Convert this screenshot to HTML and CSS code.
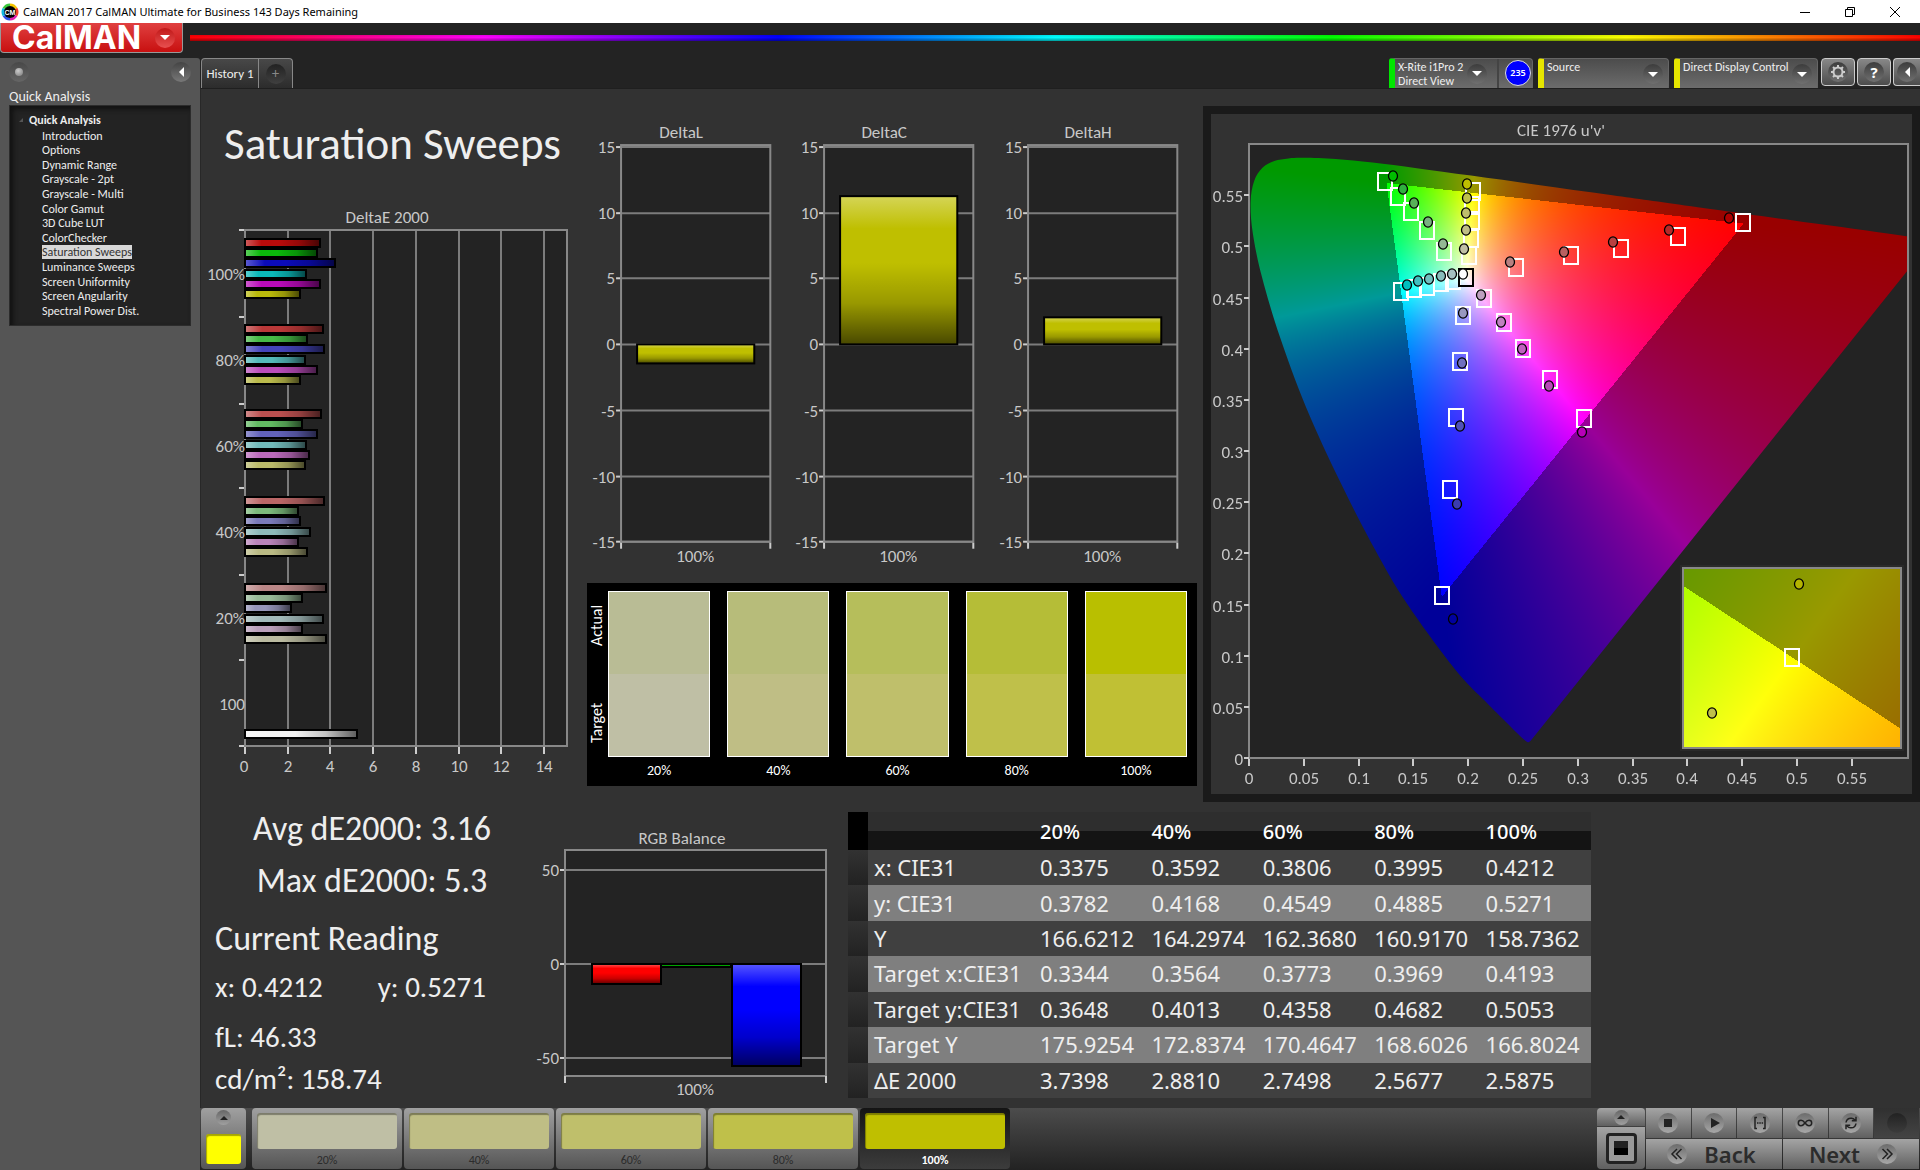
FILE: index.html
```html
<!DOCTYPE html>
<html lang="en">
<head>
<meta charset="utf-8">
<title>CalMAN 2017</title>
<link rel="stylesheet" href="styles.css">
</head>
<body>
<div class="titlebar">
  <svg class="app-icon" viewBox="0 0 18 18" aria-hidden="true">
    <g fill="none" stroke-width="3">
      <path d="M9 2a7 7 0 0 1 6 3.5" stroke="#f3c400"/>
      <path d="M15 5.500a7 7 0 0 1 0 7" stroke="#f0402c"/>
      <path d="M15 12.500a7 7 0 0 1-6 3.500" stroke="#e020b0"/>
      <path d="M9 16a7 7 0 0 1-6-3.500" stroke="#3050e8"/>
      <path d="M3 12.500a7 7 0 0 1 0-7" stroke="#10b8e0"/>
      <path d="M3 5.500a7 7 0 0 1 6-3.500" stroke="#3cc83c"/>
    </g>
    <circle cx="9" cy="9" r="6" fill="#000"/>
    <text x="9" y="12" class="app-icon-text">CM</text>
  </svg>
  <span class="titlebar-text">CalMAN 2017 CalMAN Ultimate for Business 143 Days Remaining</span>
  <div class="window-controls">
    <button aria-label="Minimize"><svg viewBox="0 0 12 12"><path d="M1 6.500h10"/></svg></button>
    <button aria-label="Restore"><svg viewBox="0 0 12 12"><path d="M1.500 3.500h7v7h-7zM3.500 3.500v-2h7v7h-2"/></svg></button>
    <button aria-label="Close"><svg viewBox="0 0 12 12"><path d="M1 1l10 10M11 1L1 11"/></svg></button>
  </div>
</div>

<div class="brandbar">
  <button class="logo"><span>CalMAN</span><i class="knob knob-red"><b class="tri-down"></b></i></button>
  <div class="rainbow"></div>
</div>

<div class="shell">
  <aside class="sidebar">
    <div class="sidebar-top">
      <button class="knob knob-pin" aria-label="Pin panel"><b class="bead"></b></button>
      <button class="knob knob-back" aria-label="Collapse panel"><b class="tri-left"></b></button>
    </div>
    <h2>Quick Analysis</h2>
    <nav class="tree">
      <a class="tree-root" href="#"><b class="corner"></b>Quick Analysis</a>
      <a href="#">Introduction</a>
      <a href="#">Options</a>
      <a href="#">Dynamic Range</a>
      <a href="#">Grayscale - 2pt</a>
      <a href="#">Grayscale - Multi</a>
      <a href="#">Color Gamut</a>
      <a href="#">3D Cube LUT</a>
      <a href="#">ColorChecker</a>
      <a href="#" class="current" aria-current="page">Saturation Sweeps</a>
      <a href="#">Luminance Sweeps</a>
      <a href="#">Screen Uniformity</a>
      <a href="#">Screen Angularity</a>
      <a href="#">Spectral Power Dist.</a>
    </nav>
  </aside>

  <div class="content">
    <div class="toolbar">
      <div class="tabs">
        <button class="tab">History 1</button>
        <button class="tab tab-add" aria-label="Add history"><i class="knob knob-dark">+</i></button>
      </div>
      <div class="devices">
        <div class="device device-meter">
          <button class="device-main"><span>X-Rite i1Pro 2<br>Direct View</span><i class="knob"><b class="tri-down"></b></i></button>
          <span class="level">235</span>
        </div>
        <div class="device device-source">
          <select aria-label="Source"><option>Source</option></select>
          <i class="knob"><b class="tri-down"></b></i>
        </div>
        <div class="device device-display">
          <select aria-label="Direct Display Control"><option>Direct Display Control</option></select>
          <i class="knob"><b class="tri-down"></b></i>
        </div>
        <div class="tools">
          <button class="tool" aria-label="Settings"><i class="knob"><svg viewBox="0 0 20 20" class="gear"><circle cx="10" cy="10" r="4.500"/><path d="M10 5.500V3M10 17v-2.500M5.500 10H3M17 10h-2.500M6.800 6.800L5 5M15 15l-1.800-1.800M6.800 13.200L5 15M15 5l-1.800 1.800"/></svg></i></button>
          <button class="tool" aria-label="Help"><i class="knob knob-help">?</i></button>
          <button class="tool tool-last" aria-label="Collapse"><i class="knob"><b class="tri-left"></b></i></button>
        </div>
      </div>
    </div>

    <main>
      <div class="row-top">
        <section class="col-left">
          <h1>Saturation Sweeps</h1>
          <svg id="delta-e" class="chart" viewBox="0 0 374 590"></svg>
        </section>
        <section class="col-mid">
          <div class="deltas">
            <svg id="delta-l" class="chart" viewBox="0 0 203 464"></svg>
            <svg id="delta-c" class="chart" viewBox="0 0 203 464"></svg>
            <svg id="delta-h" class="chart" viewBox="0 0 203 464"></svg>
          </div>
          <div class="swatches">
            <div class="swatch-axis"><span>Actual</span><span>Target</span></div>
            <div class="swatch-grid">
              <figure class="s20"><div class="pair"></div><figcaption>20%</figcaption></figure>
              <figure class="s40"><div class="pair"></div><figcaption>40%</figcaption></figure>
              <figure class="s60"><div class="pair"></div><figcaption>60%</figcaption></figure>
              <figure class="s80"><div class="pair"></div><figcaption>80%</figcaption></figure>
              <figure class="s100"><div class="pair"></div><figcaption>100%</figcaption></figure>
            </div>
          </div>
        </section>
        <section class="col-cie">
          <canvas id="gamut" width="701" height="680"></canvas>
          <svg id="cie" class="chart" viewBox="0 0 701 680"></svg>
        </section>
      </div>

      <div class="row-bottom">
        <section class="stats">
          <p class="big mid">Avg dE2000: 3.16</p>
          <p class="big mid">Max dE2000: 5.3</p>
          <p class="big reading">Current Reading</p>
          <p class="xy"><span>x: 0.4212</span><span>y: 0.5271</span></p>
          <p class="lum">fL: 46.33</p>
          <p class="cd">cd/m²: 158.74</p>
        </section>
        <section class="balance">
          <svg id="rgb" class="chart" viewBox="0 0 304 280"></svg>
        </section>
        <section class="data">
          <table>
            <thead><tr><th class="grip"></th><th></th><th>20%</th><th>40%</th><th>60%</th><th>80%</th><th>100%</th></tr></thead>
            <tbody>
              <tr><td class="grip"></td><th>x: CIE31</th><td>0.3375</td><td>0.3592</td><td>0.3806</td><td>0.3995</td><td>0.4212</td></tr>
              <tr><td class="grip"></td><th>y: CIE31</th><td>0.3782</td><td>0.4168</td><td>0.4549</td><td>0.4885</td><td>0.5271</td></tr>
              <tr><td class="grip"></td><th>Y</th><td>166.6212</td><td>164.2974</td><td>162.3680</td><td>160.9170</td><td>158.7362</td></tr>
              <tr><td class="grip"></td><th>Target x:CIE31</th><td>0.3344</td><td>0.3564</td><td>0.3773</td><td>0.3969</td><td>0.4193</td></tr>
              <tr><td class="grip"></td><th>Target y:CIE31</th><td>0.3648</td><td>0.4013</td><td>0.4358</td><td>0.4682</td><td>0.5053</td></tr>
              <tr><td class="grip"></td><th>Target Y</th><td>175.9254</td><td>172.8374</td><td>170.4647</td><td>168.6026</td><td>166.8024</td></tr>
              <tr><td class="grip"></td><th>ΔE 2000</th><td>3.7398</td><td>2.8810</td><td>2.7498</td><td>2.5677</td><td>2.5875</td></tr>
            </tbody>
          </table>
        </section>
      </div>
    </main>

    <footer>
      <button class="series" aria-label="Series colour"><i class="knob knob-small"><b class="tri-up"></b></i><span class="chip"></span></button>
      <div class="levels">
        <button class="level-btn l20"><span class="chip"></span>20%</button>
        <button class="level-btn l40"><span class="chip"></span>40%</button>
        <button class="level-btn l60"><span class="chip"></span>60%</button>
        <button class="level-btn l80"><span class="chip"></span>80%</button>
        <button class="level-btn l100 active"><span class="chip"></span>100%</button>
      </div>
      <div class="player">
        <div class="pattern">
          <button class="pattern-up" aria-label="Pattern options"><i class="knob knob-small"><b class="tri-up"></b></i></button>
          <button class="pattern-show" aria-label="Pattern window"><span class="frame"><span></span></span></button>
        </div>
        <div class="transport">
          <button aria-label="Stop"><svg viewBox="0 0 20 20"><path d="M6 6h8v8H6z"/></svg></button>
          <button aria-label="Play"><svg viewBox="0 0 20 20"><path d="M7 5l9 5-9 5z"/></svg></button>
          <button aria-label="Read series"><svg viewBox="0 0 20 20" class="line"><path d="M7 4.500H5v11h2M13 4.500h2v11h-2M7 10h1.500M9.300 10h1.500M11.600 10h1.500"/></svg></button>
          <button aria-label="Read continuously"><svg viewBox="0 0 20 20" class="line"><path d="M10 10C8.500 8 7.500 7.300 6 7.300a2.700 2.700 0 0 0 0 5.400c1.500 0 2.500-.7 4-2.700s2.500-2.700 4-2.700a2.700 2.700 0 0 1 0 5.400c-1.500 0-2.500-.7-4-2.700z"/></svg></button>
          <button aria-label="Refresh"><svg viewBox="0 0 20 20" class="line"><path d="M5 9.500c.5-3 3-4.500 5.500-4.300 1.500.1 2.500.8 3.500 1.800M15 3.800v4h-4.200M15 10.500c-.5 3-3 4.500-5.500 4.300-1.500-.1-2.500-.8-3.500-1.800M5 16.200v-4h4.200"/></svg></button>
          <button class="off" aria-label="Record" disabled><svg viewBox="0 0 20 20"></svg></button>
        </div>
        <div class="pager">
          <button><svg viewBox="0 0 20 20" class="line"><path d="M10 5l-5 5 5 5M14.500 5l-5 5 5 5"/></svg><span>Back</span></button>
          <button><span>Next</span><svg viewBox="0 0 20 20" class="line"><path d="M10 5l5 5-5 5M5.500 5l5 5-5 5"/></svg></button>
        </div>
      </div>
    </footer>
  </div>
</div>
<script src="charts.js"></script>
</body>
</html>
```
FILE: styles.css
```css
* { box-sizing: border-box; }

body {
  margin: 0;
  min-height: 100vh;
  display: flex;
  flex-direction: column;
  background: #232323;
  color: #eee;
  font-family: Carlito, Lato, sans-serif;
  font-size: 12px;
  line-height: 14px;
}

h1, h2, p, figure { margin: 0; font-weight: 400; }
button, select {
  margin: 0;
  padding: 0;
  border: 0;
  color: inherit;
  font: inherit;
  background: none;
}
a { color: inherit; text-decoration: none; }

/* window title */
.titlebar {
  display: flex;
  align-items: center;
  height: 23px;
  padding: 0 3px 0 1px;
  background: #fff;
  color: #000;
  font: 11px/22px "Noto Sans", "Open Sans", sans-serif;
}
.app-icon { width: 18px; height: 18px; }
.app-icon-text { font: 700 7px "Liberation Sans", sans-serif; fill: #fff; text-anchor: middle; }
.titlebar-text { margin: 0 auto 0 4px; }
.window-controls { display: flex; height: 21px; }
.window-controls button { width: 45px; display: grid; place-items: center; }
.window-controls svg { width: 12px; height: 12px; fill: none; stroke: #000; }

/* brand strip */
.brandbar { display: flex; height: 35px; }
.logo {
  display: flex;
  align-items: center;
  justify-content: space-between;
  width: 183px;
  height: 30px;
  padding: 0 7px 0 11px;
  border: 1px solid #999;
  border-top: 0;
  border-radius: 0 0 4px 4px;
  background: linear-gradient(#e04040, #c81010);
  color: #fff;
  font: 700 32px/28px Inter, sans-serif;
}
.rainbow {
  flex: 1;
  height: 6px;
  margin: 12px 0 0 7px;
  background: linear-gradient(rgba(0,0,0,.1), transparent 40%, rgba(0,0,0,.4)),
    linear-gradient(90deg, #f00, #f0f 17%, #00f 34%, #0ff 50%, #0f0 66%, #ff0 83%, #f00);
}

/* round knobs */
.knob {
  flex: none;
  display: grid;
  place-items: center;
  width: 20px;
  height: 20px;
  border-radius: 50%;
  background: linear-gradient(#3c3c3c, #707070);
  font-style: normal;
}
.knob-red { background: linear-gradient(#c01818, #e85050); }
.knob-pin { background: linear-gradient(#484848, #666); }
.knob-back { background: linear-gradient(#444, #787878); }
.knob-dark { background: linear-gradient(#222, #404040); color: #888; font: 14px/18px "Noto Sans", sans-serif; }
.knob-small { width: 15px; height: 15px; background: linear-gradient(#666, #a0a0a0); }
.knob-help { color: #fff; font: 700 15px/20px "Noto Sans", sans-serif; }
.tri-down { border: 5px solid transparent; border-top-color: #fff; border-bottom: 0; }
.tri-up { border: 4px solid transparent; border-bottom-color: #222; border-top: 0; }
.tri-left { border: 5px solid transparent; border-right-color: #fff; border-left: 0; }
.bead { width: 8px; height: 8px; border-radius: 50%; background: radial-gradient(circle at 40% 35%, #ccc, #777); }

/* sidebar */
.shell { flex: 1; display: flex; }
.sidebar {
  width: 200px;
  flex: none;
  padding: 4px 9px;
  background: #555;
  border-radius: 0 3px 0 0;
}
.sidebar-top { display: flex; justify-content: space-between; }
.sidebar h2 { margin: 7px 0 0; font-size: 14px; line-height: 16px; }
.tree {
  display: flex;
  flex-direction: column;
  align-items: flex-start;
  justify-content: space-between;
  min-height: 221px;
  padding: 7px 0 7px 32px;
  background: #232323;
  border: 1px solid #2c2c2c;
  box-shadow: inset 3px 3px 5px #111;
}
.tree .tree-root { display: flex; align-items: center; margin: 0 0 1px -23px; font-weight: 700; }
.corner { width: 4px; height: 4px; margin-right: 6px; border: 2px solid transparent; border-right-color: #555; border-bottom-color: #555; }
.tree .current { background: #d8d8d8; color: #333; }

/* tab strip and device selectors */
.content { flex: 1; min-width: 0; display: flex; flex-direction: column; }
.toolbar { display: flex; justify-content: space-between; height: 30px; }
.tabs { display: flex; margin-left: 1px; }
.tab {
  width: 58px;
  border: 1px solid #888;
  border-bottom: 0;
  border-radius: 4px 0 0 0;
  background: linear-gradient(#484848, #2c2c2c);
  font-size: 13px;
}
.tab-add { display: grid; place-items: center; width: 34px; border-left: 0; border-radius: 0 4px 0 0; }
.devices { display: flex; gap: 5px; }
.device {
  position: relative;
  display: flex;
  border: 1px solid #666;
  border-bottom: 0;
  border-left: 6px solid #e6e600;
  border-radius: 3px 4px 0 0;
  background: linear-gradient(#4c4c4c, #6c6c6c);
}
.device-meter { width: 144px; border-left-color: #00e600; }
.device-source { width: 131px; }
.device-display { width: 144px; }
.device-main {
  display: flex;
  align-items: center;
  justify-content: space-between;
  width: 104px;
  padding: 0 10px 0 3px;
  border-right: 2px solid #444;
  text-align: left;
}
.level {
  width: 26px;
  height: 26px;
  margin: 1px 0 0 6px;
  border: 1px solid #ddd;
  border-radius: 50%;
  background: #00f;
  color: #fff;
  font: 600 9px/24px "Noto Sans", sans-serif;
  text-align: center;
}
.device select { appearance: none; width: 100%; padding: 0 0 14px 3px; line-height: 14px; }
.device > .knob { position: absolute; right: 5px; bottom: 4px; pointer-events: none; }
.tools { display: flex; gap: 2px; margin-left: -2px; }
.tool {
  display: grid;
  place-items: center;
  width: 34px;
  height: 28px;
  border: 1px solid #ccc;
  border-radius: 4px;
  background: linear-gradient(#888, #4c4c4c);
}
.tool-last { width: 27px; border-right: 0; border-radius: 4px 0 0 4px; }
.gear { width: 20px; height: 20px; fill: none; stroke: #ccc; stroke-width: 2; }

/* dashboard */
main { flex: 1; padding-top: 17px; background: #323232; border-left: 1px solid #282828; border-top: 1px solid #1f1f1f; }
.row-top { display: grid; grid-template-columns: 374fr 628fr 717fr; align-items: start; }
h1 { padding: 10px 0 0 23px; height: 94px; font-size: 45px; line-height: 56px; }
.chart { display: block; width: 100%; }
.chart text { fill: #c8c8c8; font-size: 17px; }
.deltas { display: grid; grid-template-columns: repeat(3, 1fr); padding: 0 14px 0 4px; }
.swatches {
  display: flex;
  gap: 4px;
  margin: 12px 6px 0 12px;
  padding: 8px 10px 5px 3px;
  background: #000;
  color: #fff;
  font-size: 14px;
  line-height: 20px;
  text-align: center;
}
.swatch-axis {
  display: flex;
  flex-direction: row-reverse;
  justify-content: space-between;
  width: 14px;
  height: 166px;
  padding: 14px 0;
  writing-mode: vertical-rl;
  transform: rotate(180deg);
  font-size: 16px;
  line-height: 14px;
}
.swatch-grid { flex: 1; display: grid; grid-template-columns: repeat(5, 1fr); gap: 17px; }
.pair { height: 166px; border: 1px solid #fff; }
.swatches figcaption { padding-top: 4px; }
.s20 .pair { background: linear-gradient(#b9bc95 50%, #bfbfa5 50%); }
.s40 .pair { background: linear-gradient(#b7bc7a 50%, #bfbe85 50%); }
.s60 .pair { background: linear-gradient(#b6be5b 50%, #bfbf6b 50%); }
.s80 .pair { background: linear-gradient(#b5bd37 50%, #bfc04a 50%); }
.s100 .pair { background: linear-gradient(#b9bf00 50%, #c0c034 50%); }
.col-cie { display: grid; border: 8px solid #1a1a1a; }
.col-cie > * { grid-area: 1 / 1; width: 100%; }

.row-bottom { display: grid; grid-template-columns: 334fr 304fr 9fr 743fr 329fr; align-items: start; }
.stats { padding: 1px 0 0 14px; }
.stats p { font-size: 29px; line-height: 42px; }
.stats .big { font-size: 34px; line-height: 52px; }
.stats .mid { width: 314px; text-align: center; }
.stats .reading { padding-top: 6px; }
.stats .xy { display: flex; gap: 55px; padding-top: 1px; }
.stats .lum { padding-top: 8px; }
.balance { padding-top: 24px; }
.data { grid-column: 4; padding-top: 10px; }
table { width: 100%; height: 286px; border-collapse: collapse; table-layout: fixed; font: 22px/35px "Noto Sans", "Open Sans", sans-serif; }
th, td { padding: 0 0 0 6px; text-align: left; font-weight: 400; white-space: nowrap; }
thead th { height: 38px; font-size: 20px; font-weight: 500; color: #fff; }
thead { background: linear-gradient(#2e2e2e 50%, #141414 50%); }
thead .grip { width: 20px; background: #000; }
thead th:nth-child(2) { width: 166px; }
tbody tr { background: #404040; }
tbody tr:nth-child(even) { background: #7f7f7f; }
tbody .grip { padding: 0; background: linear-gradient(#323232, #222); }

/* bottom bar */
footer {
  display: flex;
  height: 62px;
  padding-left: 1px;
  background: linear-gradient(#4c4c4c, #222);
}
footer button { color: #2c2c2c; }
.series {
  display: flex;
  flex-direction: column;
  align-items: center;
  justify-content: space-between;
  width: 45px;
  height: 61px;
  padding: 2px 0 5px;
  border-radius: 4px;
  background: linear-gradient(#a0a0a0, #555);
}
.chip { display: block; border-radius: 3px; box-shadow: inset 1px 2px 1px rgba(0,0,0,.35); }
.series .chip { width: 35px; height: 30px; background: #ff0; }
.levels { display: flex; gap: 2px; margin-left: 6px; }
.level-btn {
  width: 150px;
  height: 61px;
  padding: 5px 5px 0;
  border-radius: 4px;
  background: linear-gradient(#a0a0a0, #555);
  line-height: 22px;
}
.level-btn .chip { height: 36px; }
.level-btn.active { background: linear-gradient(#141414, #3c3c3c); color: #fff; font-weight: 700; }
.l20 .chip { background: #bfbfa5; }
.l40 .chip { background: #bfbe85; }
.l60 .chip { background: #bfbf6b; }
.l80 .chip { background: #bfc04a; }
.l100 .chip { background: #bfbf00; }

.player {
  display: grid;
  grid-template-columns: 48px 273px;
  grid-template-rows: 30px 30px;
  gap: 1px;
  margin: 0 1px 0 auto;
}
.pattern { grid-row: span 2; display: grid; grid-template-rows: 18px 1fr; gap: 1px; }
.pattern button, .transport button, .pager button {
  display: flex;
  align-items: center;
  justify-content: center;
  background: linear-gradient(#a4a4a4, #606060);
}
.pattern-up { border-radius: 4px 4px 0 0; }
.pattern-show { border-radius: 0 0 4px 4px; }
.frame { display: grid; place-items: center; width: 31px; height: 31px; border: 3px solid #222; border-radius: 4px; background: #999; }
.frame span { width: 14px; height: 14px; background: linear-gradient(#222 50%, #000 50%); }
.transport { display: grid; grid-template-columns: repeat(6, 1fr); gap: 1px; }
.transport svg, .pager svg { width: 20px; height: 20px; border-radius: 50%; background: linear-gradient(#6c6c6c, #a8a8a8); fill: #222; }
.player svg.line { fill: none; stroke: #222; stroke-width: 1.5; }
.transport .off { background: linear-gradient(#303030, #444); }
.transport .off svg { background: linear-gradient(#222, #3c3c3c); }
.pager { display: grid; grid-template-columns: 1fr 1fr; gap: 1px; }
.pager button { gap: 17px; padding-right: 5px; font: 600 22px/28px "Noto Sans", "Open Sans", sans-serif; }
.pager button:last-child { padding: 0 0 0 4px; }
```
FILE: charts.js
```js
const NS = 'http://www.w3.org/2000/svg';

function add(parent, tag, attrs, text) {
  const el = document.createElementNS(NS, tag);
  for (const key in attrs) el.setAttribute(key, attrs[key]);
  if (text !== undefined) el.textContent = text;
  parent.append(el);
  return el;
}

function rect(svg, x1, y1, x2, y2, attrs) {
  return add(svg, 'rect', { x: x1, y: y1, width: x2 - x1, height: y2 - y1, ...attrs });
}

function label(svg, x, y, text, anchor = 'middle') {
  add(svg, 'text', { x, y, 'text-anchor': anchor }, text);
}

/* Highlight at one end of a bar, shade at the other. */
function sheen(svg, id, horizontal) {
  const g = add(svg, 'linearGradient', { id, x1: 0, y1: 0, x2: horizontal ? 1 : 0, y2: horizontal ? 0 : 1 });
  [[0, '#fff', .34], [.22, '#fff', 0], [.45, '#000', 0], [.72, '#000', .2], [1, '#000', .62]]
    .forEach(([offset, color, alpha]) => add(g, 'stop', { offset, 'stop-color': color, 'stop-opacity': alpha }));
}

function bar(svg, id, x1, y1, x2, y2, fill) {
  rect(svg, x1, y1, x2, y2, { fill });
  rect(svg, x1, y1, x2, y2, { fill: `url(#${id})` });
  rect(svg, x1, y1, x2, y2, { fill: 'none', stroke: '#000', 'stroke-width': 2 });
}

function line(svg, x1, y1, x2, y2, color, width = 2) {
  add(svg, 'line', { x1, y1, x2, y2, stroke: color, 'stroke-width': width });
}

const GRID = '#7c7c7c', FRAME = '#888', TICK = '#ccc', PLOT = '#232323';

/* ΔE 2000 by saturation level */
(function () {
  const svg = document.getElementById('delta-e');
  sheen(svg, 'sheen-e', true);
  label(svg, 186, 23, 'DeltaE 2000');
  rect(svg, 44, 30, 366, 546, { fill: PLOT });
  [0, 2, 4, 6, 8, 10, 12, 14].forEach((v, i) => {
    const x = 44 + Math.round(v * 21.35);
    line(svg, x, 30, x, 546, GRID);
    line(svg, x, 546, x, 554, TICK);
    label(svg, x - (i ? 0 : 1), 572, v);
  });
  [30, 117, 204, 288, 375, 460, 546].forEach(y => line(svg, 38, y, 44, y, TICK));
  rect(svg, 44, 30, 366, 546, { fill: 'none', stroke: FRAME, 'stroke-width': 2 });
  const groups = [
    ['100%', 43, [119, 116, 134, 105, 119, 99], ['#b90b0b', '#0bb90b', '#0b0bb9', '#0bb9b9', '#b90bb9', '#b9b90b']],
    ['80%', 129, [122, 106, 123, 104, 116, 99], ['#ba3838', '#46ba46', '#4444ba', '#54baba', '#ba4cba', '#baba4c']],
    ['60%', 214, [120, 101, 116, 105, 108, 104], ['#ba5050', '#62ba62', '#6262ba', '#72baba', '#ba6aba', '#baba6a']],
    ['40%', 301, [123, 97, 99, 109, 97, 106], ['#ba6666', '#7cba7c', '#7a7aba', '#8ebaba', '#ba84ba', '#baba84']],
    ['20%', 388, [125, 101, 90, 122, 101, 125], ['#ba8686', '#98ba98', '#9696ba', '#a2baba', '#ba9fba', '#babaa0']]
  ];
  groups.forEach(([name, top, ends, colors], g) => {
    ends.forEach((end, i) => {
      const y = top + Math.round(i * 10.2);
      bar(svg, 'sheen-e', 44, y - 4, end, y + 4, colors[i]);
    });
    label(svg, 44, 80 + g * 86, name, 'end');
  });
  bar(svg, 'sheen-e', 44, 530, 156, 538, '#f2f2f2');
  label(svg, 44, 510, '100', 'end');
})();

/* Delta L / C / H */
[['delta-l', 'DeltaL', 238, 257], ['delta-c', 'DeltaC', 90, 238], ['delta-h', 'DeltaH', 211, 238]]
  .forEach(([id, title, y1, y2]) => {
    const svg = document.getElementById(id);
    sheen(svg, 'sheen-' + id, false);
    label(svg, 102, 32, title);
    rect(svg, 42, 39, 191, 435, { fill: PLOT });
    [[15, 41], [10, 107], [5, 172], [0, 238], [-5, 304], [-10, 370], [-15, 435]].forEach(([v, y]) => {
      line(svg, 42, y, 191, y, GRID);
      line(svg, 37, y, 42, y, TICK);
      label(svg, 36, y + 6, v, 'end');
    });
    rect(svg, 42, 39, 191, 435, { fill: 'none', stroke: FRAME, 'stroke-width': 2 });
    line(svg, 42, 436, 42, 442, TICK);
    line(svg, 191, 436, 191, 442, TICK);
    bar(svg, 'sheen-' + id, 58, y1, 175, y2, '#bfbf00');
    label(svg, 116, 455, '100%');
  });

/* RGB balance */
(function () {
  const svg = document.getElementById('rgb');
  sheen(svg, 'sheen-rgb', false);
  label(svg, 147, 18, 'RGB Balance');
  rect(svg, 30, 24, 291, 250, { fill: PLOT });
  [[50, 44], [0, 138], [-50, 232]].forEach(([v, y]) => {
    line(svg, 30, y, 291, y, GRID);
    line(svg, 25, y, 30, y, TICK);
    label(svg, 24, y + 6, v, 'end');
  });
  rect(svg, 30, 24, 291, 250, { fill: 'none', stroke: FRAME, 'stroke-width': 2 });
  line(svg, 30, 250, 30, 257, TICK);
  line(svg, 291, 250, 291, 257, TICK);
  bar(svg, 'sheen-rgb', 57, 138, 126, 158, '#f00');
  bar(svg, 'sheen-rgb', 126, 138, 196, 141, '#0a0');
  bar(svg, 'sheen-rgb', 197, 138, 266, 240, '#00f');
  label(svg, 160, 269, '100%');
})();

/* CIE 1976 u'v' diagram */
const X0 = 38, Y0 = 644, SX = 1096, SY = 1023;

function toUv([x, y]) {
  const d = -2 * x + 12 * y + 3;
  return [4 * x / d, 9 * y / d];
}

/* Brightest colour of a chromaticity; dimmed outside the Rec. 709 triangle. */
function colorOf(x, y) {
  const X = x / y, Z = (1 - x - y) / y;
  const lin = [
    3.2406 * X - 1.5372 - .4986 * Z,
    -.9689 * X + 1.8758 + .0415 * Z,
    .0557 * X - .2040 + 1.0570 * Z
  ];
  const inside = Math.min(...lin) >= 0;
  const max = Math.max(...lin);
  const k = inside ? 255 : 153;
  return lin.map(c => k * Math.max(c, 0) / max);
}

(function () {
  const canvas = document.getElementById('gamut');
  const ctx = canvas.getContext('2d');
  const W = canvas.width, H = canvas.height;

  function field(x0, y0, w, h, toXy) {
    const layer = document.createElement('canvas');
    layer.width = w;
    layer.height = h;
    const c = layer.getContext('2d');
    const img = c.createImageData(w, h);
    for (let j = 0; j < h; j++) for (let i = 0; i < w; i++) {
      const [x, y] = toXy(x0 + i, y0 + j);
      const rgb = colorOf(x, y), o = (j * w + i) * 4;
      img.data[o] = rgb[0];
      img.data[o + 1] = rgb[1];
      img.data[o + 2] = rgb[2];
      img.data[o + 3] = 255;
    }
    c.putImageData(img, 0, 0);
    ctx.drawImage(layer, x0, y0);
  }

  ctx.fillStyle = '#323232';
  ctx.fillRect(0, 0, W, H);
  ctx.fillStyle = PLOT;
  ctx.fillRect(X0, 30, 659, 614);

  const locus = [
    [.1741, .0050], [.1714, .0051], [.1644, .0109], [.1566, .0177], [.1440, .0297], [.1241, .0578],
    [.1096, .0868], [.0913, .1327], [.0687, .2007], [.0454, .2950], [.0235, .4127], [.0082, .5384],
    [.0039, .6548], [.0139, .7502], [.0389, .8120], [.0743, .8338], [.1142, .8262], [.1547, .8059],
    [.2296, .7543], [.3016, .6923], [.3731, .6245], [.4441, .5547], [.5125, .4866], [.5752, .4242],
    [.6270, .3725], [.6915, .3083], [.7347, .2653]
  ].map(toUv).map(([u, v]) => [X0 + u * SX, Y0 - v * SY]);

  ctx.save();
  ctx.beginPath();
  ctx.rect(X0, 30, 659, 614);
  ctx.clip();
  ctx.beginPath();
  const n = locus.length;
  ctx.moveTo(...locus[0]);
  for (let i = 0; i < n - 1; i++) {
    const p0 = locus[Math.max(i - 1, 0)], p1 = locus[i], p2 = locus[i + 1], p3 = locus[Math.min(i + 2, n - 1)];
    ctx.bezierCurveTo(
      p1[0] + (p2[0] - p0[0]) / 6, p1[1] + (p2[1] - p0[1]) / 6,
      p2[0] - (p3[0] - p1[0]) / 6, p2[1] - (p3[1] - p1[1]) / 6,
      p2[0], p2[1]);
  }
  ctx.closePath();
  ctx.clip();
  field(X0, 30, 659, 614, (px, py) => {
    const u = (px - X0) / SX, v = Math.max((Y0 - py) / SY, .001);
    const d = 6 * u - 16 * v + 12;
    return [9 * u / d, 4 * v / d];
  });
  ctx.restore();

  /* magnified inset round the 100% yellow target */
  ctx.fillStyle = '#2a2a2a';
  ctx.fillRect(469, 451, 224, 186);
  field(472, 454, 218, 180, (px, py) => [.4193 + (px - 581) / 4040, .5053 - (py - 543) / 3340]);

  const svg = document.getElementById('cie');
  label(svg, 350, 22, "CIE 1976 u'v'");
  rect(svg, X0, 30, 697, 644, { fill: 'none', stroke: FRAME, 'stroke-width': 2 });
  for (let i = 0; i < 12; i++) {
    const value = String(+(i * .05).toFixed(2));
    const x = X0 + Math.round(i * 54.8), y = Y0 - Math.round(i * 51.15);
    line(svg, x, 645, x, 652, TICK);
    label(svg, x, 670, value);
    line(svg, 33, y, 38, y, TICK);
    label(svg, 32, y + 7, value, 'end');
  }
  rect(svg, 472, 454, 690, 634, { fill: 'none', stroke: FRAME, 'stroke-width': 2 });

  const targets = [
    [174, 67], [187, 82], [200, 97], [216, 116], [233, 137],
    [262, 77], [261, 91], [261, 106], [260, 124], [258, 141],
    [305, 153], [360, 141], [410, 134], [467, 122], [532, 108],
    [190, 177], [203, 174], [216, 172], [230, 168], [242, 166],
    [273, 184], [293, 208], [312, 234], [339, 265], [373, 304],
    [252, 201], [249, 247], [245, 303], [239, 375], [231, 481],
    [581, 543]
  ];
  const square = ([x, y], stroke) =>
    rect(svg, x - 7, y - 8, x + 7, y + 9, { fill: 'none', stroke, 'stroke-width': 2 });
  targets.forEach(p => square(p, '#fff'));
  square([255, 163], '#000');

  const readings = [
    [182, 62, '#00bf00'], [192, 75, '#30b040'], [203, 89, '#58b058'], [217, 108, '#78b080'], [232, 130, '#94b894'],
    [256, 70, '#bfbf00'], [256, 84, '#bfc04a'], [255, 99, '#bfbf6b'], [255, 116, '#bfbe85'], [253, 135, '#bfbfa5'],
    [299, 148, '#b88080'], [353, 138, '#b86060'], [402, 128, '#b84040'], [458, 116, '#b82828'], [518, 104, '#b00000'],
    [196, 171, '#00bfbf'], [207, 167, '#40bfbf'], [218, 165, '#70bfbf'], [230, 162, '#88bcbc'], [241, 160, '#a4c0c0'],
    [252, 160, '#ffffff'],
    [270, 181, '#bfa0bf'], [290, 208, '#bf80bf'], [311, 235, '#bf60bf'], [338, 272, '#b848b8'], [371, 318, '#b800b8'],
    [252, 199, '#9898bf'], [251, 249, '#7070bf'], [249, 312, '#5050b8'], [246, 390, '#3c3cb0'], [242, 505, '#0000a0'],
    [588, 470, '#b4b400'], [501, 599, '#bfc04a']
  ];
  readings.forEach(([cx, cy, fill]) =>
    add(svg, 'ellipse', { cx, cy, rx: 4.5, ry: 5.2, fill, stroke: '#000', 'stroke-width': 1.3 }));
})();
```
